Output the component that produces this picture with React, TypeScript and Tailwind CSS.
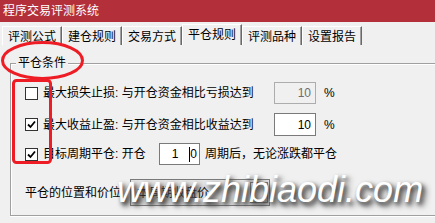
import React from "react";

const FONT = "font-['Liberation_Sans','Noto_Sans_CJK_SC',sans-serif]";

function CheckBox({ checked }: { checked: boolean }) {
  return (
    <div className="w-[13px] h-[13px] shrink-0 border border-[#333333] bg-white flex items-center justify-center">
      {checked && (
        <svg width="11" height="11" viewBox="0 0 11 11">
          <path d="M2 5.5 L4.5 8 L9 2.5" fill="none" stroke="#000" strokeWidth="1.8" />
        </svg>
      )}
    </div>
  );
}

function Tab({ label, active }: { label: string; active?: boolean }) {
  return (
    <div
      className={
        active
          ? "w-[60px] h-[21px] flex items-center justify-center pb-[1px] border-t border-l border-white border-r border-r-[#696969] shadow-[inset_-1px_0_0_#a0a0a0] bg-[#f0f0f0]"
          : "w-[60px] h-[19px] flex items-center justify-center pt-[1px] border-t border-l border-white border-r border-r-[#696969] shadow-[inset_-1px_0_0_#a0a0a0]"
      }
    >
      <span className="leading-none">{label}</span>
    </div>
  );
}

export default function App() {
  return (
    <div className={`relative w-[435px] h-[223px] overflow-hidden bg-[#f0f0f0] text-[12px] text-black ${FONT}`}>
      <div className="h-[22px] bg-[#b3303a] text-white flex items-center pl-[3px] leading-none">
        程序交易评测系统
      </div>

      <div className="flex items-end h-[23px] pl-[2px]">
        <Tab label="评测公式" />
        <Tab label="建仓规则" />
        <Tab label="交易方式" />
        <Tab label="平仓规则" active />
        <Tab label="评测品种" />
        <Tab label="设置报告" />
      </div>

      <div className="relative ml-[10px] mt-[18px] w-[440px] h-[153px] border border-[#a0a0a0] shadow-[inset_1px_1px_0_#ffffff,0_1px_0_#ffffff]">
        <span className="absolute left-[5px] top-[-8px] px-[2px] bg-[#f0f0f0] leading-[14px]">平仓条件</span>

        <div className="pt-[18px] pl-[14px] flex flex-col">
          <div className="flex items-center h-[22px]">
            <CheckBox checked={false} />
            <span className="ml-[5px] w-[231px] leading-none">最大损失止损: 与开仓资金相比亏损达到</span>
            <div className="w-[42px] h-[22px] border border-[#adadad] bg-[#f0f0f0] text-[#6d6d6d] flex items-center justify-end pr-[4px] leading-none">
              10
            </div>
            <span className="ml-[8px] leading-none">%</span>
          </div>

          <div className="flex items-center h-[23px] mt-[9px]">
            <CheckBox checked />
            <span className="ml-[5px] w-[231px] leading-none">最大收益止盈: 与开仓资金相比收益达到</span>
            <div className="w-[42px] h-[23px] border border-[#7a7a7a] bg-white flex items-center justify-end pr-[4px] leading-none">
              10
            </div>
            <span className="ml-[8px] leading-none">%</span>
          </div>

          <div className="flex items-center h-[22px] mt-[7px]">
            <CheckBox checked />
            <span className="ml-[5px] w-[116px] leading-none">目标周期平仓: 开仓</span>
            <div className="w-[41px] h-[22px] border border-[#7a7a7a] bg-white flex items-center justify-end pr-[2px] leading-none">
              <span>1</span>
              <span className="w-[1px] h-[15px] bg-black ml-[11px]" />
              <span>0</span>
            </div>
            <span className="ml-[5px] leading-none">周期后，无论涨跌都平仓</span>
          </div>

          <div className="flex items-center h-[27px] mt-[14px]">
            <span className="w-[105px] leading-none">平仓的位置和价位</span>
            <div className="w-[140px] h-[27px] border border-[#7a7a7a] bg-[#e5e5e5] flex items-stretch">
              <div className="flex-1 flex items-center pl-[6px] leading-none">本周期收盘价</div>
              <div className="w-[18px] my-[2px] mr-[1px] border border-[#7a7a7a]" />
            </div>
          </div>
        </div>
      </div>

      <div className="absolute left-[117px] top-[172px] text-[36px] italic leading-none text-white font-['Liberation_Sans',sans-serif] [text-shadow:2px_3px_4px_#3a3a3a,4px_4px_6px_#5a5a5a] pointer-events-none whitespace-nowrap">
        www.zhibiaodi.com
      </div>

      <svg className="absolute inset-0 pointer-events-none" width="435" height="223" viewBox="0 0 435 223">
        <ellipse cx="42.5" cy="60.5" rx="40" ry="18" fill="none" stroke="#ee1c24" strokeWidth="3" />
        <rect x="13.5" y="80.5" width="37" height="82" rx="3" fill="none" stroke="#ee1c24" strokeWidth="3" />
      </svg>
    </div>
  );
}
